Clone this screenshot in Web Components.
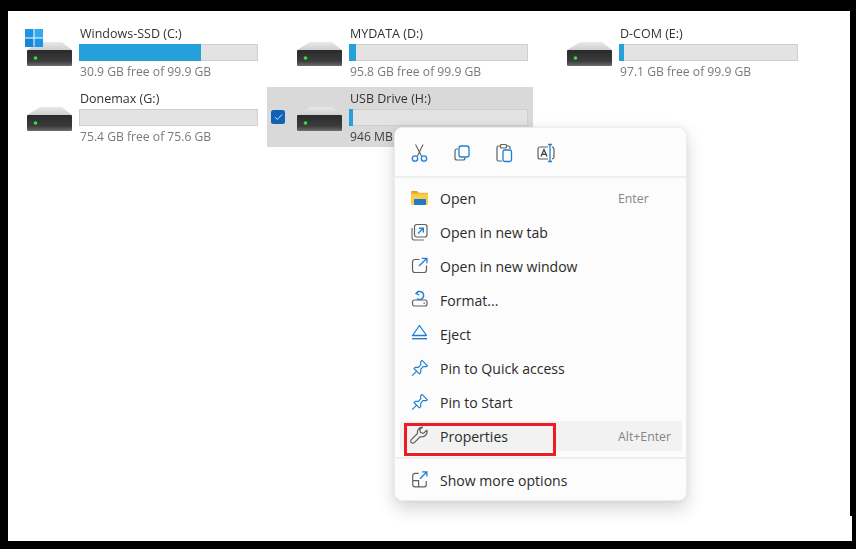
<!DOCTYPE html>
<html><head><meta charset="utf-8"><title>Drives</title>
<style>html,body{margin:0;background:#000;height:100%}body{font-family:"Open Sans","Noto Sans",sans-serif}</style>
</head><body>
<desktop-frame>
  <drive-grid>
    <drive-tile name="Windows-SSD (C:)" free="30.9 GB free of 99.9 GB" pct="69" windows></drive-tile>
    <drive-tile name="MYDATA (D:)" free="95.8 GB free of 99.9 GB" pct="4"></drive-tile>
    <drive-tile name="D-COM (E:)" free="97.1 GB free of 99.9 GB" pct="3"></drive-tile>
    <drive-tile name="Donemax (G:)" free="75.4 GB free of 75.6 GB" pct="0"></drive-tile>
    <drive-tile name="USB Drive (H:)" free="946 MB free of 1.00 GB" pct="2" selected></drive-tile>
  </drive-grid>
  <context-menu>
    <svg slot="tools" width="20" height="20" viewBox="0 0 20 20" fill="none"><path d="M6.500 1.500 12.500 13M14 1.500 8.500 13" stroke="#606060" stroke-width="1.100"/><circle cx="6" cy="15.500" r="2.700" stroke="#1f7fd6" stroke-width="1.300"/><circle cx="15" cy="15.500" r="2.700" stroke="#1f7fd6" stroke-width="1.300"/></svg>
    <svg slot="tools" width="20" height="20" viewBox="0 0 20 20" fill="none"><path d="M6 6H5a2 2 0 0 0-2 2v7a2 2 0 0 0 2 2h6a2 2 0 0 0 2-2v-1" stroke="#606060" stroke-width="1.200"/><rect x="7" y="3" width="10" height="11" rx="2.200" stroke="#1f7fd6" stroke-width="1.300"/></svg>
    <svg slot="tools" width="20" height="20" viewBox="0 0 20 20" fill="none"><path d="M7 3H4.500A1.500 1.500 0 0 0 3 4.500v12A1.500 1.500 0 0 0 4.500 18H8M13 3h1.500A1.500 1.500 0 0 1 16 4.500V6" stroke="#606060" stroke-width="1.200"/><rect x="6.500" y="1.500" width="6" height="3.500" rx="1" stroke="#606060" stroke-width="1.200"/><rect x="9" y="7" width="8.500" height="11.500" rx="1.800" stroke="#1f7fd6" stroke-width="1.300"/></svg>
    <svg slot="tools" width="20" height="20" viewBox="0 0 20 20" fill="none"><g transform="translate(-1 0)"><path d="M12 4H4a2 2 0 0 0-2 2v8a2 2 0 0 0 2 2h8M16 4.200a2 2 0 0 1 2 1.800v8a2 2 0 0 1-2 1.800" stroke="#606060" stroke-width="1.200"/><path d="M5 13.500 8 6.500l3 7M6 11.300h4" stroke="#3c3c3c" stroke-width="1.200"/><path d="M14 2v16M12 1.500h4M12 18.500h4" stroke="#1f7fd6" stroke-width="1.300"/></g></svg>

    <menu-item label="Open" shortcut="Enter"><svg slot="icon" width="20" height="20" viewBox="0 0 20 20"><path d="M1 4a1 1 0 0 1 1-1h5l2 2H1z" fill="#e0a51e"/><path d="M1 5h17v11a1 1 0 0 1-1 1H2a1 1 0 0 1-1-1z" fill="#fbcb4e"/><rect x="4" y="11" width="12" height="6" rx="1" fill="#1f78c8"/><rect x="1" y="4.800" width="17" height="1.500" fill="#f2bb35"/></svg></menu-item>
    <menu-item label="Open in new tab"><svg slot="icon" width="20" height="20" viewBox="0 0 20 20" fill="none"><g transform="translate(-1 0)"><path d="M3 6v9.500A2.500 2.500 0 0 0 5.500 18H15" stroke="#707070" stroke-width="1.200"/><rect x="5.500" y="2.500" width="12.500" height="12.500" rx="2.200" stroke="#606060" stroke-width="1.200"/><path d="M9 11.500l5-5M10 6.200h4.300v4.300" stroke="#1f7fd6" stroke-width="1.400"/></g></svg></menu-item>
    <menu-item label="Open in new window"><svg slot="icon" width="20" height="20" viewBox="0 0 20 20" fill="none"><path d="M9.500 3.500H5A2.500 2.500 0 0 0 2.500 6v8A2.500 2.500 0 0 0 5 16.500h9A2.500 2.500 0 0 0 16.500 14v-4.500" stroke="#606060" stroke-width="1.200"/><path d="M9 10 16.700 2.500M11.800 2.300h5.200v5" stroke="#1f7fd6" stroke-width="1.300"/></svg></menu-item>
    <menu-item label="Format..."><svg slot="icon" width="20" height="20" viewBox="0 0 20 20" fill="none"><rect x="2.500" y="10" width="14.500" height="6" rx="2" stroke="#606060" stroke-width="1.200"/><path d="M13.500 13.200h1.500" stroke="#606060" stroke-width="1.200"/><path d="M6.200 3.500A4 4 0 1 1 7 8.500" stroke="#1f7fd6" stroke-width="1.400"/><path d="M8.500 1 6 3.500l3.200 1.300" stroke="#1f7fd6" stroke-width="1.300"/></svg></menu-item>
    <menu-item label="Eject"><svg slot="icon" width="20" height="20" viewBox="0 0 20 20" fill="none"><path d="M9.500 1.500 16.500 11.500H2.500z" stroke="#1f7fd6" stroke-width="1.300" stroke-linejoin="round"/><path d="M2 14.700h15" stroke="#1f7fd6" stroke-width="1.400"/></svg></menu-item>
    <menu-item label="Pin to Quick access"><svg slot="icon" width="20" height="20" viewBox="0 0 20 20" fill="none"><g transform="translate(.8 .6) scale(.9)"><path d="M12.500 2 18.500 8 17 9l-3.500 0-2.500 3v3.500L9.500 17 3.500 11 5 9.800h3.500L11 7V3.500z" stroke="#1f7fd6" stroke-width="1.300" stroke-linejoin="round"/><path d="M6.500 14 1.500 19" stroke="#1f7fd6" stroke-width="1.300"/></g></svg></menu-item>
    <menu-item label="Pin to Start"><svg slot="icon" width="20" height="20" viewBox="0 0 20 20" fill="none"><g transform="translate(.8 .6) scale(.9)"><path d="M12.500 2 18.500 8 17 9l-3.500 0-2.500 3v3.500L9.500 17 3.500 11 5 9.800h3.500L11 7V3.500z" stroke="#1f7fd6" stroke-width="1.300" stroke-linejoin="round"/><path d="M6.500 14 1.500 19" stroke="#1f7fd6" stroke-width="1.300"/></g></svg></menu-item>
    <menu-item label="Properties" shortcut="Alt+Enter" hot><svg slot="icon" width="20" height="20" viewBox="0 0 20 20" fill="none"><g transform="translate(-1 -1)"><path d="M13.500 2.200a5 5 0 0 0-5 6.300L2.300 14.700a2.100 2.100 0 0 0 3 3l6.200-6.200a5 5 0 0 0 6.300-6.300l-3.300 3.200-3-.9-.8-3z" stroke="#606060" stroke-width="1.200" stroke-linejoin="round"/></g></svg></menu-item>
    <menu-item slot="footer" label="Show more options"><svg slot="icon" width="20" height="20" viewBox="0 0 20 20" fill="none"><g transform="translate(.5 .2) scale(.9)"><path d="M9 3.500H5A2.500 2.500 0 0 0 2.500 6v10A2.500 2.500 0 0 0 5 18.500h10a2.500 2.500 0 0 0 2.500-2.500v-4M2.500 11.500H9v7" stroke="#606060" stroke-width="1.300"/><path d="M10.500 9.500 18 2M13 1.800h5.200V7" stroke="#1f7fd6" stroke-width="1.400"/></g></svg></menu-item>
  </context-menu>
  <red-mark></red-mark>
</desktop-frame>
<script>
const def=(tag,html,init)=>customElements.define(tag,class extends HTMLElement{
  constructor(){super();this.attachShadow({mode:'open'}).innerHTML=html;}
  connectedCallback(){init&&init(this,this.shadowRoot);}
});
def('desktop-frame',`<style>
:host{display:block;box-sizing:border-box;position:absolute;inset:0;background:#000}
.w{position:absolute;left:8px;top:11px;width:842px;height:530px;background:#fff}
.n{position:absolute;left:850px;top:516px;width:2px;height:25px;background:#fff}
.c{height:100%;overflow:hidden;padding-top:11px;box-sizing:border-box}
</style><div class="w"><div class="c"><slot></slot></div></div><div class="n"></div>`);
def('drive-grid',`<style>:host{display:grid;grid-template-columns:repeat(3,266px);grid-auto-rows:60px;column-gap:4px;row-gap:5px;margin-left:-11px}</style><slot></slot>`);
def('drive-tile',`<style>
:host{display:flex;align-items:center;box-sizing:border-box;padding-left:4px;font-size:12.500px;color:#3a3a3a;filter:blur(.3px)}
:host([selected]){background:#d9d9d9}
.chk{width:14px;height:14px;border-radius:2.500px;background:#0f62b8;visibility:hidden;margin-right:12px;flex:none;display:flex;align-items:center;justify-content:center}
:host([selected]) .chk{visibility:visible}
.ico{position:relative;width:45px;height:24px;flex:none;margin-top:3px;margin-right:7px}
.win{position:absolute;left:-2px;top:-13px;width:18px;height:18px;display:none}
:host([windows]) .win{display:block}
.txt{width:179px;flex:none;display:flex;flex-direction:column;padding-top:1px}
.name{line-height:18px;padding-left:1px;white-space:nowrap;color:#333;margin-bottom:1px}
.bar{height:17px;box-sizing:border-box;background:#e3e3e3;border:1px solid #cfcfcf;margin-bottom:2px}
.fill{height:100%;background:#26a0da;margin:-1px 0 0 -1px;padding-bottom:2px;box-sizing:content-box}
.free{line-height:18px;padding-left:1px;white-space:nowrap;color:#7a7a7a;font-size:12.150px}
:host([selected]) .free{color:#3f3f3f}
</style>
<span class="chk"><svg width="9" height="8" viewBox="0 0 9 8" fill="none"><path d="M1 4.200 3.300 6.500 8 1.500" stroke="#cfe0f5" stroke-width="1"/></svg></span>
<span class="ico">
<svg width="45" height="24" viewBox="0 0 45 24"><defs><linearGradient id="t" x1="0" y1="0" x2="0" y2="1"><stop offset="0" stop-color="#e9e9e9"/><stop offset="1" stop-color="#cfcfcf"/></linearGradient><linearGradient id="b" x1="0" y1="0" x2="0" y2="1"><stop offset="0" stop-color="#2a2a2a"/><stop offset=".7" stop-color="#3c3c3c"/><stop offset="1" stop-color="#6d6d6d"/></linearGradient></defs><path d="M13 0H35L45 8H0z" fill="url(#t)"/><rect y="8" width="45" height="16" rx="1" fill="url(#b)"/><circle cx="8.500" cy="16" r="1.800" fill="#35e33a"/></svg>
<svg class="win" viewBox="0 0 18 18"><g fill="#1c95e6"><rect width="8.500" height="8.500"/><rect x="9.500" width="8.500" height="8.500" fill="#35a9ef"/><rect y="9.500" width="8.500" height="8.500" fill="#1685d8"/><rect x="9.500" y="9.500" width="8.500" height="8.500"/></g></svg>
</span>
<span class="txt"><span class="name"></span><span class="bar"><div class="fill"></div></span><span class="free"></span></span>`,
(h,s)=>{s.querySelector('.name').textContent=h.getAttribute('name');s.querySelector('.free').textContent=h.getAttribute('free');
const p=+h.getAttribute('pct');const f=s.querySelector('.fill');f.style.width=p+'%';if(!p)f.style.display='none';});
def('context-menu',`<style>
:host{position:absolute;left:386px;top:116px;width:293px;height:374px;box-sizing:border-box;background:#fcfcfc;border:1px solid #ececec;border-radius:8px;box-shadow:0 8px 18px rgba(0,0,0,.16),0 0 6px rgba(0,0,0,.05);display:flex;flex-direction:column;font-size:14.050px;color:#2b2b2b}
.tools{height:50px;flex:none;box-sizing:border-box;border-bottom:2px solid #efefef;display:flex;align-items:center;padding-left:14px;gap:22.700px;padding-top:2px}
.list{display:flex;flex-direction:column;gap:4px;padding:5px 4px 0 5px}
.foot{border-top:2px solid #efefef;margin-top:6px;padding:6px 4px 0 5px}
</style><div class="tools"><slot name="tools"></slot></div><div class="list"><slot></slot></div><div class="foot"><slot name="footer"></slot></div>`);
def('menu-item',`<style>
:host{display:flex;align-items:center;height:30px;border-radius:4px;padding-left:10px;position:relative}
:host([hot]){background:#f2f2f2}
.i{width:20px;height:20px;flex:none;margin-right:10px;display:flex}
.l{width:178px;flex:none;white-space:nowrap}
.s{font-size:12.300px;color:#858585;white-space:nowrap}
</style><span class="i"><slot name="icon"></slot></span><span class="l"></span><span class="s"></span>`,
(h,s)=>{s.querySelector('.l').textContent=h.getAttribute('label');s.querySelector('.s').textContent=h.getAttribute('shortcut')||'';});
def('red-mark',`<style>:host{position:absolute;left:396px;top:412px;width:152px;height:33px;box-sizing:border-box;border:3px solid #ed1c24}</style>`);
</script>
</body></html>
